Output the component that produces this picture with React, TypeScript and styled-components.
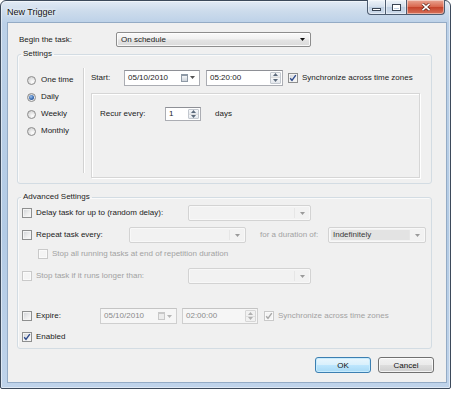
import React from "react";
import styled, { createGlobalStyle } from "styled-components";

const GlobalStyle = createGlobalStyle`
  html, body { margin: 0; padding: 0; background: #ffffff; }
  body { font-family: "Liberation Sans", Arial, sans-serif; font-size: 8px; color: #1b1b1b; }
  * { box-sizing: border-box; }
`;

const Window = styled.div`
  width: 451px;
  height: 389px;
  border: 1px solid #3d4a5b;
  border-radius: 6px 6px 2px 2px;
  background: linear-gradient(180deg, #e2ebf5 0px, #cddcec 10px, #bcd1e8 22px, #b3cbe5 60%, #bfd3ea 100%);
  box-shadow: inset 0 0 0 1px rgba(255, 255, 255, 0.5);
  padding: 0 3px 5px 6px;
  display: flex;
  flex-direction: column;
`;

const TitleBar = styled.div`
  height: 21px;
  display: flex;
  justify-content: space-between;
  align-items: flex-start;
`;

const Title = styled.div`
  font-size: 9px;
  line-height: 11px;
  padding-top: 6px;
  color: #111;
  text-shadow: 0 0 5px #fff, 0 0 3px #fff;
`;

const CapGroup = styled.div`
  display: flex;
  height: 15px;
  margin: -1px 2px 0 0;
`;

const CapBtn = styled.div<{ $w: number; $kind: "min" | "max" | "close" }>`
  width: ${(p) => p.$w}px;
  height: 15px;
  display: flex;
  align-items: center;
  justify-content: center;
  border: 1px solid #4d5c70;
  border-top: none;
  border-left-width: ${(p) => (p.$kind === "min" ? 1 : 0)}px;
  border-bottom-left-radius: ${(p) => (p.$kind === "min" ? 4 : 0)}px;
  border-bottom-right-radius: ${(p) => (p.$kind === "close" ? 4 : 0)}px;
  background: ${(p) =>
    p.$kind === "close"
      ? "linear-gradient(180deg, #e9a694 0%, #d9684f 48%, #c5432b 52%, #d7725a 100%)"
      : "linear-gradient(180deg, #eef3f9 0%, #d5e0ed 48%, #bfcfe2 52%, #cfdcec 100%)"};
  box-shadow: inset 0 0 0 1px rgba(255, 255, 255, 0.45);
`;

const MinGlyph = styled.span`
  width: 9px;
  height: 3px;
  margin-top: 5px;
  background: #fff;
  border: 1px solid #3a4554;
`;

const MaxGlyph = styled.span`
  width: 9px;
  height: 7px;
  background: transparent;
  border: 1px solid #3a4554;
  box-shadow: inset 0 0 0 1px #fff, inset 0 2px 0 1px #fff;
`;

const Client = styled.div`
  flex: 1;
  border: 1px solid #94abc5;
  background: #f0f0f0;
  padding-top: 9px;
  display: flex;
  flex-direction: column;
`;

const BeginRow = styled.div`
  display: grid;
  grid-template-columns: 97px 195px;
  align-items: center;
  height: 15px;
  padding-left: 11px;
`;

const Text = styled.span<{ $w?: number; $ml?: number; $disabled?: boolean }>`
  flex: none;
  white-space: nowrap;
  width: ${(p) => (p.$w ? `${p.$w}px` : "auto")};
  margin-left: ${(p) => p.$ml ?? 0}px;
  color: ${(p) => (p.$disabled ? "#a2a2a2" : "#1b1b1b")};
  line-height: 10px;
`;

const Group = styled.fieldset<{ $mt: number }>`
  margin: ${(p) => p.$mt}px 14px 0 9px;
  padding: 0;
  min-width: 0;
  border: 1px solid #d3dce3;
  border-radius: 3px;
  box-shadow: inset 1px 1px 0 #fafafa;
`;

const Legend = styled.legend`
  padding: 0 2px;
  margin-left: 3px;
  line-height: 10px;
  height: 10px;
  color: #1b1b1b;
`;

const SettingsBody = styled.div`
  display: grid;
  grid-template-columns: 65px 2px 1fr;
  padding-bottom: 5px;
`;

const RadioCol = styled.div`
  display: flex;
  flex-direction: column;
  gap: 5px;
  padding: 15px 0 0 9px;
`;

const RadioRow = styled.div`
  display: flex;
  align-items: center;
  height: 12px;
  gap: 5px;
`;

const Radio = styled.span<{ $on?: boolean }>`
  width: 9px;
  height: 9px;
  flex: none;
  border-radius: 50%;
  border: 1px solid #8c8c8c;
  background: radial-gradient(circle at 65% 70%, #ffffff 0%, #e4e4e4 50%, #c4c4c4 100%);
  display: flex;
  align-items: center;
  justify-content: center;
  &::after {
    content: "";
    display: ${(p) => (p.$on ? "block" : "none")};
    width: 5px;
    height: 5px;
    border-radius: 50%;
    background: radial-gradient(circle at 40% 35%, #9cc3ef 0%, #3a6bb0 55%, #1b3f7a 100%);
  }
`;

const VSep = styled.div`
  margin: 9px 0 5px;
  border-left: 1px solid #d2d2d2;
  border-right: 1px solid #ffffff;
`;

const RightCol = styled.div`
  padding: 11px 11px 0 6px;
  display: flex;
  flex-direction: column;
`;

const FlowRow = styled.div<{ $h?: number }>`
  display: flex;
  align-items: center;
  height: ${(p) => p.$h ?? 15}px;
`;

const RecurBox = styled.div`
  margin-top: 8px;
  height: 85px;
  border: 1px solid #d6d6d6;
  box-shadow: inset 1px 1px 0 #ffffff, 1px 1px 0 #ffffff;
  padding: 13px 0 0 8px;
`;

const Field = styled.div<{ $w: number; $ml?: number; $h?: number; $disabled?: boolean }>`
  flex: none;
  width: ${(p) => p.$w}px;
  height: ${(p) => p.$h ?? 16}px;
  margin-left: ${(p) => p.$ml ?? 0}px;
  display: flex;
  align-items: center;
  padding-left: 3px;
  border: 1px solid ${(p) => (p.$disabled ? "#cfcfcf" : "#abadb3")};
  border-top-color: ${(p) => (p.$disabled ? "#c4c4c4" : "#8e9096")};
  background: ${(p) => (p.$disabled ? "#f6f6f6" : "#ffffff")};
  color: ${(p) => (p.$disabled ? "#8a8a8a" : "#1b1b1b")};
`;

const FieldValue = styled.span`
  flex: 1;
  white-space: nowrap;
  line-height: 10px;
`;

const CalIcon = styled.span<{ $disabled?: boolean }>`
  width: 7px;
  height: 8px;
  border: 1px solid ${(p) => (p.$disabled ? "#c8c8c8" : "#8f9aa6")};
  border-top-width: 2px;
  background: ${(p) => (p.$disabled ? "#ececec" : "linear-gradient(#f4f6f8, #cdd3da)")};
  margin-right: 2px;
`;

const SmallArrow = styled.svg`
  width: 5px;
  height: 3px;
  margin-right: 4px;
  flex: none;
`;

const SpinCol = styled.div<{ $disabled?: boolean }>`
  width: 11px;
  align-self: stretch;
  margin: 1px 1px 1px 0;
  display: flex;
  flex-direction: column;
  border: 1px solid ${(p) => (p.$disabled ? "#d6d6d6" : "#c3c8cf")};
  border-radius: 1px;
`;

const SpinHalf = styled.span<{ $disabled?: boolean }>`
  flex: 1;
  display: flex;
  align-items: center;
  justify-content: center;
  background: ${(p) => (p.$disabled ? "#f1f1f1" : "linear-gradient(#f7f8fa, #e3e7ec)")};
  & + & {
    border-top: 1px solid ${(p) => (p.$disabled ? "#dedede" : "#cfd4da")};
  }
`;

const Combo = styled.div<{ $w: number; $ml?: number; $disabled?: boolean; $h?: number }>`
  flex: none;
  width: ${(p) => p.$w}px;
  height: ${(p) => p.$h ?? 16}px;
  margin-left: ${(p) => p.$ml ?? 0}px;
  display: flex;
  align-items: stretch;
  border: 1px solid ${(p) => (p.$disabled ? "#d3d3d3" : "#8d8d8d")};
  border-radius: 2px;
  background: ${(p) =>
    p.$disabled
      ? "#f2f2f2"
      : "linear-gradient(180deg, #fafafa 0%, #f0f0f0 48%, #e4e4e4 52%, #dadada 100%)"};
  box-shadow: inset 0 0 0 1px ${(p) => (p.$disabled ? "#f8f8f8" : "rgba(255,255,255,0.8)")};
`;

const ComboField = styled.span<{ $hl?: boolean; $disabled?: boolean }>`
  flex: 1;
  margin: 2px 0 2px 2px;
  padding-left: 2px;
  display: flex;
  align-items: center;
  white-space: nowrap;
  line-height: 10px;
  background: ${(p) => (p.$hl ? "#e3e3e3" : "transparent")};
  color: ${(p) => (p.$hl ? "#3a3a3a" : "#1b1b1b")};
  border-right: ${(p) => (p.$disabled ? "1px solid #e6e6e6" : "none")};
`;

const ComboArrow = styled.span`
  width: 15px;
  display: flex;
  align-items: center;
  justify-content: center;
`;

const Check = styled.span<{ $disabled?: boolean; $ml?: number }>`
  width: 10px;
  height: 10px;
  flex: none;
  margin-left: ${(p) => p.$ml ?? 0}px;
  border: 1px solid ${(p) => (p.$disabled ? "#c9c9c9" : "#8e8f8f")};
  background: ${(p) =>
    p.$disabled ? "#f4f4f4" : "linear-gradient(135deg, #cfd2d6 0%, #eeeeee 60%, #fbfbfb 100%)"};
  box-shadow: inset 0 0 0 1px ${(p) => (p.$disabled ? "#fafafa" : "#f4f4f4")};
  display: flex;
  align-items: center;
  justify-content: center;
`;

const AdvBody = styled.div`
  padding: 3px 0 3px 4px;
`;

const AdvRow = styled.div<{ $mt: number; $indent?: number }>`
  display: flex;
  align-items: center;
  height: 16px;
  margin-top: ${(p) => p.$mt}px;
  padding-left: ${(p) => p.$indent ?? 0}px;
`;

const ButtonRow = styled.div`
  display: flex;
  justify-content: flex-end;
  gap: 7px;
  margin: 8px 12px 0 0;
`;

const Button = styled.button<{ $default?: boolean }>`
  width: 56px;
  height: 16px;
  padding: 0;
  font: inherit;
  font-size: 8px;
  color: #111;
  border: 1px solid ${(p) => (p.$default ? "#3c7fb1" : "#707070")};
  border-radius: 3px;
  background: ${(p) =>
    p.$default
      ? "linear-gradient(180deg, #eaf6fd 0%, #d9f0fc 48%, #bee6fd 52%, #a7d9f5 100%)"
      : "linear-gradient(180deg, #f2f2f2 0%, #ebebeb 48%, #dddddd 52%, #cfcfcf 100%)"};
  box-shadow: inset 0 0 0 1px ${(p) => (p.$default ? "#c7ebfd" : "rgba(255,255,255,0.75)")};
`;

const Arrow = ({ color }: { color: string }) => (
  <svg width="5" height="3" viewBox="0 0 5 3">
    <path d="M0 0 H5 L2.5 3 Z" fill={color} />
  </svg>
);

const SpinArrow = ({ up, color }: { up?: boolean; color: string }) => (
  <svg width="5" height="3" viewBox="0 0 5 3">
    <path d={up ? "M0 3 H5 L2.5 0 Z" : "M0 0 H5 L2.5 3 Z"} fill={color} />
  </svg>
);

const CheckMark = ({ color }: { color: string }) => (
  <svg width="8" height="8" viewBox="0 0 8 8">
    <path d="M1.2 4.2 L3 6.4 L6.8 1.2" fill="none" stroke={color} strokeWidth="1.4" />
  </svg>
);

const CheckBox = ({ checked, disabled, ml }: { checked?: boolean; disabled?: boolean; ml?: number }) => (
  <Check $disabled={disabled} $ml={ml}>
    {checked && <CheckMark color={disabled ? "#a8a8a8" : "#2d4a8c"} />}
  </Check>
);

const DropDown = ({
  w,
  ml,
  h,
  value,
  disabled,
  hl,
}: {
  w: number;
  ml?: number;
  h?: number;
  value?: string;
  disabled?: boolean;
  hl?: boolean;
}) => (
  <Combo $w={w} $ml={ml} $h={h} $disabled={disabled}>
    <ComboField $hl={hl} $disabled={disabled}>
      {value}
    </ComboField>
    <ComboArrow>
      <Arrow color={disabled ? "#9a9a9a" : "#111"} />
    </ComboArrow>
  </Combo>
);

const DateField = ({ w, ml, value, disabled }: { w: number; ml?: number; value: string; disabled?: boolean }) => (
  <Field $w={w} $ml={ml} $disabled={disabled}>
    <FieldValue>{value}</FieldValue>
    <CalIcon $disabled={disabled} />
    <SmallArrow viewBox="0 0 5 3">
      <path d="M0 0 H5 L2.5 3 Z" fill={disabled ? "#b5b5b5" : "#555"} />
    </SmallArrow>
  </Field>
);

const SpinField = ({
  w,
  ml,
  h,
  value,
  disabled,
}: {
  w: number;
  ml?: number;
  h?: number;
  value: string;
  disabled?: boolean;
}) => {
  const c = disabled ? "#b0b0b0" : "#5d6b7c";
  return (
    <Field $w={w} $ml={ml} $h={h} $disabled={disabled}>
      <FieldValue>{value}</FieldValue>
      <SpinCol $disabled={disabled}>
        <SpinHalf $disabled={disabled}>
          <SpinArrow up color={c} />
        </SpinHalf>
        <SpinHalf $disabled={disabled}>
          <SpinArrow color={c} />
        </SpinHalf>
      </SpinCol>
    </Field>
  );
};

export default function App() {
  return (
    <>
      <GlobalStyle />
      <Window>
        <TitleBar>
          <Title>New Trigger</Title>
          <CapGroup>
            <CapBtn $w={19} $kind="min">
              <MinGlyph />
            </CapBtn>
            <CapBtn $w={21} $kind="max">
              <MaxGlyph />
            </CapBtn>
            <CapBtn $w={38} $kind="close">
              <svg width="10" height="8" viewBox="0 0 10 8">
                <path d="M1.5 0.8 L8.5 7.2 M8.5 0.8 L1.5 7.2" stroke="#5a2418" strokeWidth="3" />
                <path d="M1.5 0.8 L8.5 7.2 M8.5 0.8 L1.5 7.2" stroke="#ffffff" strokeWidth="1.6" />
              </svg>
            </CapBtn>
          </CapGroup>
        </TitleBar>
        <Client>
          <BeginRow>
            <Text>Begin the task:</Text>
            <DropDown w={195} h={15} value="On schedule" />
          </BeginRow>

          <Group $mt={2}>
            <Legend>Settings</Legend>
            <SettingsBody>
              <RadioCol>
                <RadioRow>
                  <Radio />
                  <Text>One time</Text>
                </RadioRow>
                <RadioRow>
                  <Radio $on />
                  <Text>Daily</Text>
                </RadioRow>
                <RadioRow>
                  <Radio />
                  <Text>Weekly</Text>
                </RadioRow>
                <RadioRow>
                  <Radio />
                  <Text>Monthly</Text>
                </RadioRow>
              </RadioCol>
              <VSep />
              <RightCol>
                <FlowRow>
                  <Text $w={33}>Start:</Text>
                  <DateField w={76} value="05/10/2010" />
                  <SpinField w={77} ml={6} value="05:20:00" />
                  <CheckBox checked ml={5} />
                  <Text $ml={4}>Synchronize across time zones</Text>
                </FlowRow>
                <RecurBox>
                  <FlowRow $h={14}>
                    <Text $w={65}>Recur every:</Text>
                    <SpinField w={36} h={14} value="1" />
                    <Text $ml={14}>days</Text>
                  </FlowRow>
                </RecurBox>
              </RightCol>
            </SettingsBody>
          </Group>

          <Group $mt={8}>
            <Legend>Advanced Settings</Legend>
            <AdvBody>
              <AdvRow $mt={0}>
                <CheckBox />
                <Text $ml={4} $w={152}>
                  Delay task for up to (random delay):
                </Text>
                <DropDown w={123} disabled />
              </AdvRow>
              <AdvRow $mt={6}>
                <CheckBox />
                <Text $ml={4} $w={93}>
                  Repeat task every:
                </Text>
                <DropDown w={117} disabled />
                <Text $ml={14} $w={68} $disabled>
                  for a duration of:
                </Text>
                <DropDown w={98} disabled hl value="Indefinitely" />
              </AdvRow>
              <AdvRow $mt={3} $indent={16}>
                <CheckBox disabled />
                <Text $ml={4} $disabled>
                  Stop all running tasks at end of repetition duration
                </Text>
              </AdvRow>
              <AdvRow $mt={6}>
                <CheckBox disabled />
                <Text $ml={4} $w={152} $disabled>
                  Stop task if it runs longer than:
                </Text>
                <DropDown w={123} disabled />
              </AdvRow>
              <AdvRow $mt={24}>
                <CheckBox />
                <Text $ml={4} $w={64}>
                  Expire:
                </Text>
                <DateField w={77} value="05/10/2010" disabled />
                <SpinField w={76} ml={5} value="02:00:00" disabled />
                <CheckBox checked disabled ml={6} />
                <Text $ml={4} $disabled>
                  Synchronize across time zones
                </Text>
              </AdvRow>
              <AdvRow $mt={5}>
                <CheckBox checked />
                <Text $ml={4}>Enabled</Text>
              </AdvRow>
            </AdvBody>
          </Group>

          <ButtonRow>
            <Button $default>OK</Button>
            <Button>Cancel</Button>
          </ButtonRow>
        </Client>
      </Window>
    </>
  );
}
